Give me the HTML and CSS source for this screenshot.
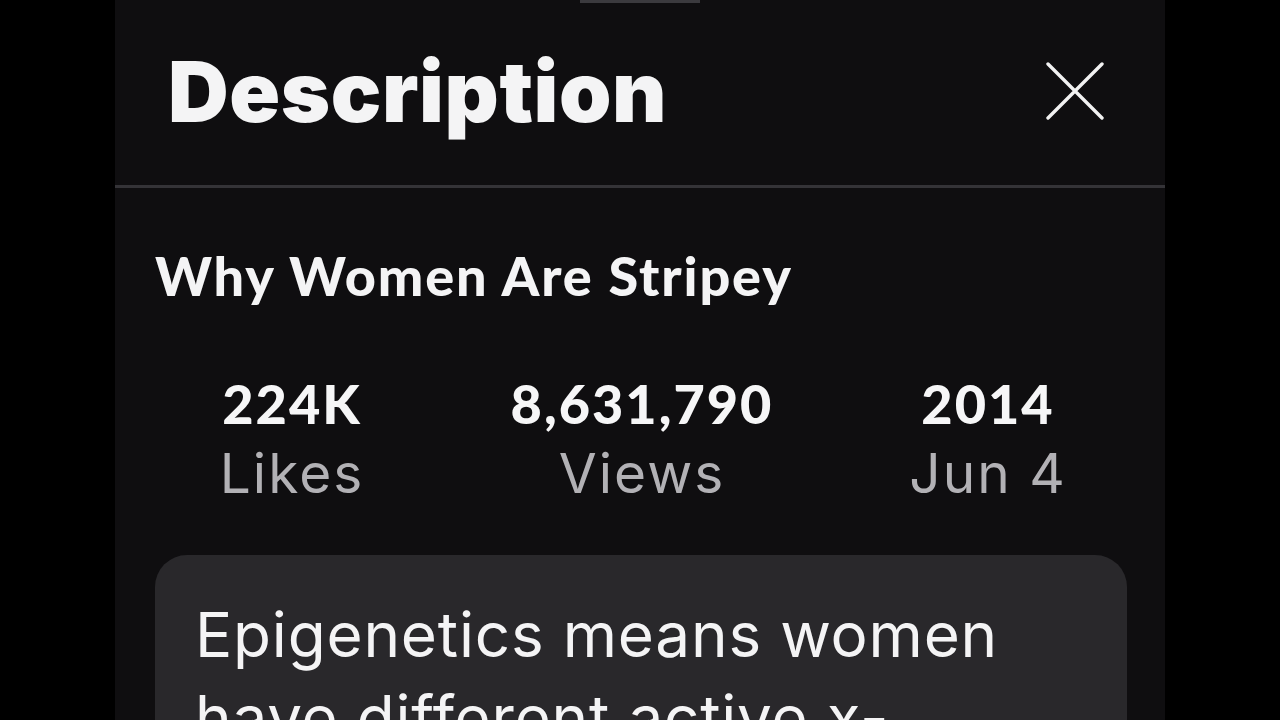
FILE: index.html
```html
<!DOCTYPE html>
<html lang="en">
<head>
  <meta charset="UTF-8" />
  <meta name="viewport" content="width=device-width, initial-scale=1.0"/>
  <title>Description</title>
  <link rel="stylesheet" href="styles.css">
</head>
<body>
  <div class="sheet">
    <div class="handle"></div>

    <div class="sheet-header">
      <h2>Description</h2>
      <button class="close-btn" aria-label="Close">
        <svg width="58" height="58" viewBox="0 0 58 58">
          <path d="M2 2 L56 56 M56 2 L2 56" stroke="#f2f2f2" stroke-width="3.4" stroke-linecap="round" fill="none"/>
        </svg>
      </button>
    </div>

    <div class="sheet-body">
      <h3 class="video-title">Why Women Are Stripey</h3>

      <div class="stats">
        <div class="stat">
          <div class="stat-value">224K</div>
          <div class="stat-label">Likes</div>
        </div>
        <div class="stat">
          <div class="stat-value">8,631,790</div>
          <div class="stat-label">Views</div>
        </div>
        <div class="stat">
          <div class="stat-value">2014</div>
          <div class="stat-label">Jun 4</div>
        </div>
      </div>

      <div class="desc-card">
        <p>Epigenetics means women have different active x-chromosomes in different cells</p>
      </div>
    </div>
  </div>
</body>
</html>
```

FILE: styles.css
```css
body {
  margin: 0;
  background: #000;
  font-family: Inter, "Liberation Sans", sans-serif;
  color: #f4f4f5;
  height: 720px;
  overflow: hidden;
}
.sheet {
  width: 1050px;
  height: 720px;
  margin: 0 auto;
  background: #0f0e10;
  position: relative;
  overflow: hidden;
}
.handle {
  position: absolute;
  top: 0;
  left: 465px;
  width: 120px;
  height: 3px;
  background: #3b3a3e;
}
.sheet-header {
  height: 188px;
  display: flex;
  align-items: center;
  justify-content: space-between;
  padding: 0 61px 0 53px;
  border-bottom: 3px solid #343337;
  box-sizing: border-box;
}
.sheet-header h2 {
  margin: 0;
  font-size: 84px;
  font-weight: 900;
  letter-spacing: 0.6px;
  color: #f4f4f5;
  line-height: 1;
  padding-bottom: 2px;
}
.close-btn {
  background: none;
  border: none;
  padding: 0;
  width: 58px;
  height: 58px;
  margin-bottom: 4px;
  cursor: pointer;
}
.sheet-body {
  padding: 0 38px 0 40px;
}
.video-title {
  margin: 58px 0 0;
  font-family: Lato, "Open Sans", sans-serif;
  font-weight: 900;
  font-size: 54px;
  letter-spacing: 1.9px;
  line-height: 60px;
  color: #f4f4f5;
}
.stats {
  display: grid;
  grid-template-columns: 274px 426px 266px;
  margin-top: 65px;
}
.stat {
  text-align: center;
}
.stat-value {
  font-family: Lato, "Open Sans", sans-serif;
  font-weight: 900;
  font-size: 54px;
  letter-spacing: 2px;
  line-height: 66px;
  color: #f6f6f7;
}
.stat-label {
  font-size: 55px;
  font-weight: 400;
  letter-spacing: 2px;
  line-height: 72px;
  color: #b2b1b5;
}
.desc-card {
  margin-top: 46px;
  background: #29282b;
  border-radius: 32px;
  padding: 38px 36px 40px 40px;
  min-height: 300px;
}
.desc-card p {
  margin: 0;
  font-size: 62px;
  letter-spacing: 0.8px;
  line-height: 83px;
  color: #f4f4f5;
}
```
